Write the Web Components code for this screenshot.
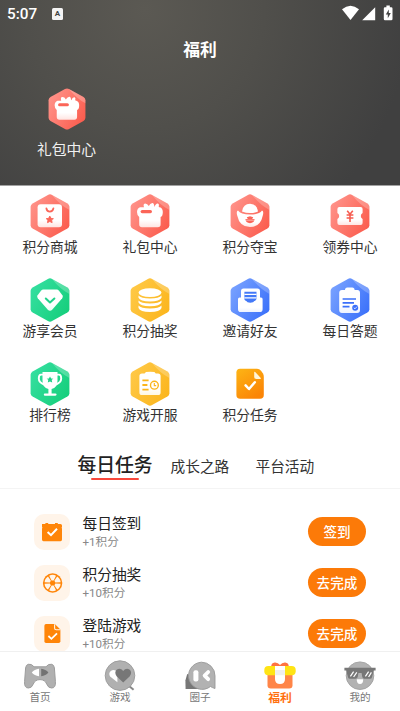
<!DOCTYPE html>
<html lang="zh-CN">
<head>
<meta charset="utf-8">
<title>福利</title>
<style>
html,body{margin:0;padding:0;background:#fff}
body{width:400px;height:711px;overflow:hidden;font-family:Roboto,"Noto Sans CJK SC",sans-serif;color:#333}
</style>
</head>
<body>
<welfare-page></welfare-page>
<script>
const hex = (a, b, c, inner) => `<svg viewBox="0 0 40 44"><defs><linearGradient id="g" x1="0" y1=".2" x2="1" y2=".8"><stop offset="0" stop-color="${a}"/><stop offset="1" stop-color="${b}"/></linearGradient><linearGradient id="w" x1="0" y1="0" x2="0" y2="1"><stop offset=".7" stop-color="#fff"/><stop offset="1" stop-color="${c}"/></linearGradient></defs>
<path d="M17.9.9Q20-.2 22.1.9L37.4 9.4Q39.4 10.6 39.4 12.8V31.2Q39.4 33.4 37.4 34.6L22.1 43.1Q20 44.2 17.9 43.1L2.6 34.6Q.6 33.4.6 31.2V12.8Q.6 10.6 2.6 9.4Z" fill="url(#g)"/><path d="M22 .9L37.4 9.4Q39.4 10.6 39.4 12.8V16Q30 11 22 .9Z" fill="#fff" opacity=".24"/>${inner}</svg>`;
const red = i => hex('#ff938a', '#fb5b4c', '#ffe5e2', i);
const green = i => hex('#35dfa0', '#15ce7b', '#eafff5', i);
const gold = i => hex('#ffc947', '#fbb51c', '#fff8e3', i);
const blue = i => hex('#79a2ff', '#3a70fa', '#edf2ff', i);
const STAR = 'M0-4L1.3-1.5 4-1.1 2 0 2.6 3.3 0 2 -2.6 3.3 -2 0 -4-1.1 -1.3-1.5Z';

const ICONS = {
  mall: red(`<rect x="7.6" y="10.2" width="24.4" height="23" rx="3" fill="url(#w)"/><path d="M16.4 14.4Q16.8 17.6 19.8 17.6T23.4 14.4" fill="none" stroke="#fb6558" stroke-width="1.8" stroke-linecap="round"/><path transform="translate(19.8 25.7)scale(.9)" d="${STAR}" fill="#fb6558" stroke="#fb6558" stroke-width="1" stroke-linejoin="round"/>`),
  gift: red(`<path d="M10 13.2H14Q12.8 9.8 15 9.4 17.4 9.3 18.8 12 20 9.4 22.3 9 24.4 9.2 24.3 13.2 26 9 28 9.6 29.4 10 28.6 13.2H30Q33 14.4 32.8 18.5T30.6 23V30.5Q30.6 33.2 27.8 33.2H12Q9.2 33.2 9.2 30.5V23Q7 21.5 7 18T10 13.2Z" fill="url(#w)"/><path d="M14 12.8H29V15H14Z" fill="#fff"/><rect x="10.6" y="16" width="11.4" height="3.2" rx="1.6" fill="#fb6558"/>`),
  ingot: red(`<path d="M12 17.4Q13.2 9.8 20 9.8T28 17.4Q20 20.8 12 17.4Z" fill="#fff"/><path d="M8 16.6Q10.6 20.6 20 20.6T32 16.6Q34 17.4 32.8 21.4 30.4 33 20 33T7.2 21.4Q6 17.4 8 16.6Z" fill="url(#w)"/><path d="M20 22.2L23.2 23.2 22.2 25.1H24.6Q24.4 29.2 20 29.2T15.4 25.1H17.8L16.8 23.2Z" fill="#fb6558"/><path d="M15.4 26.2H24.6" stroke="#fff" stroke-width=".5"/>`),
  coupon: red(`<path d="M9.4 13H30.6Q32.6 13 32.6 15V19Q30.8 20 30.8 22T32.6 25V29Q32.6 31 30.6 31H9.4Q7.4 31 7.4 29V25Q9.2 24 9.2 22T7.4 19V15Q7.4 13 9.4 13Z" fill="url(#w)"/><path d="M17.2 16.8L20 20.2 22.8 16.8M16.6 21H23.4M16.6 24H23.4M20 20.5V28" fill="none" stroke="#f65c50" stroke-width="1.6"/>`),
  diamond: green(`<path d="M13.4 11.5H26.8Q28 11.5 29 12.7L32.4 17.2Q33.4 18.8 32.2 20.2L22.4 31.4Q20 34 17.6 31.4L7.8 20.2Q6.6 18.8 7.6 17.2L11 12.7Q12 11.5 13.4 11.5Z" fill="url(#w)"/><path d="M15.8 20.5L20 24.4 24.4 20.5" fill="none" stroke="#20d18a" stroke-width="2" stroke-linecap="round" stroke-linejoin="round"/>`),
  coins: gold(`<ellipse cx="20" cy="14.6" rx="11.5" ry="4.4" fill="#fff"/><path d="M8.5 17.6Q11 20.6 20 20.6T31.5 17.6V19.8Q30 23.4 20 23.4T8.5 19.8ZM8.5 22.4Q11 25.4 20 25.4T31.5 22.4V24.6Q30 28.2 20 28.2T8.5 24.6ZM8.5 27.4Q11 30.4 20 30.4T31.5 27.4V30Q30 34 20 34T8.5 30Z" fill="#fff"/>`),
  mail: blue(`<path d="M11 24V13.2Q11 10.6 13.6 10.6H27.4Q30 10.6 30 13.2V24Z" fill="#fff"/><path d="M14.4 13.8H26.5V22L20.4 26 14.4 22Z" fill="#4379f8"/><path d="M14.4 16.3H26.5M14.4 19.9H26.5" stroke="#fff" stroke-width="1.2"/><path d="M8 21Q8 19.5 9.6 19.5H11.6Q13 19.5 13.8 21L15 22.6Q17.4 24.8 20.3 24.8T25.6 22.6L26.8 21Q27.6 19.5 29 19.5H31Q32.6 19.5 32.6 21V31.2Q32.6 34 30 34H10.6Q8 34 8 31.2Z" fill="url(#w)"/>`),
  quiz: blue(`<path d="M12 12H15Q15 9.4 17.4 9.4H22.2Q24.6 9.4 24.6 12H27.4Q30 12 30 15V32Q30 35 27.2 35H12Q9.2 35 9.2 32V15Q9.2 12 12 12Z" fill="url(#w)"/><path d="M12.6 21H26M12.6 24.8H24M12.6 28.6H19.5" stroke="#3b70fa" stroke-width="1.7"/><circle cx="25.2" cy="29.8" r="3" fill="#3b70fa"/><path d="M23.8 29.8L25 30.8 27 28.6" fill="none" stroke="#fff" stroke-width=".8"/>`),
  trophy: green(`<path d="M12.5 10H27.5V18.5Q27.5 26 21.6 27V31.4H25.4Q26.6 31.4 26.6 32.5T25.4 33.7H15Q13.8 33.7 13.8 32.5T15 31.4H18.4V27Q12.5 26 12.5 18.5Z" fill="#fff"/><path d="M13 12.6H11Q8.8 12.6 8.8 16.5T14 22.5M27 12.6H29Q31.2 12.6 31.2 16.5T26 22.5" fill="none" stroke="#fff" stroke-width="1.9"/><path transform="translate(20 17.8)scale(.85)" d="${STAR}" fill="#1ed087"/>`),
  server: gold(`<path d="M12 11.5H14.5L16 10Q20 9.5 24.4 10L25.8 11.5H28Q30.6 11.5 30.6 14V30.4Q30.6 33 28 33H12Q9.4 33 9.4 30.4V14Q9.4 11.5 12 11.5Z" fill="url(#w)"/><path d="M12.4 18.4H18.6M12.4 23H17.4M12.4 27.6H18.6" stroke="#fbb51c" stroke-width="1.8"/><circle cx="24.4" cy="23.2" r="3.9" fill="#fff" stroke="#fbb51c" stroke-width="1.4"/><path d="M24.3 21V23.6H26.2" fill="none" stroke="#fbb51c" stroke-width="1.1"/>`),
  task: `<svg viewBox="0 0 40 44"><defs><linearGradient id="g" x1="0" y1="0" x2=".6" y2="1"><stop stop-color="#fdb515"/><stop offset="1" stop-color="#fb8506"/></linearGradient></defs><path d="M10 6.8H27Q29.5 6.8 31 8.8L33 11.6Q33.8 12.8 33.8 15V33Q33.8 36.8 30 36.8H10.2Q6.4 36.8 6.4 33V10.6Q6.4 6.8 10 6.8Z" fill="url(#g)"/><path d="M24.2 10Q24.6 9.4 25.2 10L31 16.2Q31 17 30 17H26.4Q24.2 17 24.2 15Z" fill="#fff5da"/><path d="M15.6 23.4L19 27 24.8 20.2" fill="none" stroke="#fff" stroke-width="2.5" stroke-linecap="round" stroke-linejoin="round"/></svg>`,
  calendar: `<svg viewBox="0 0 36 36"><path d="M8 10H11.4V9H14.2V10H21V9H23.8V10H26.5Q28 10 28 11.5V13Q27.2 13.6 28 14.4V25.6Q28 27.3 26.5 27.3H9.5Q8 27.3 8 25.6V14.4Q8.8 13.6 8 13Z" fill="#ff8508"/><path d="M13.6 18L17 21.2 23 14.8" fill="none" stroke="#fff" stroke-width="2"/></svg>`,
  wheel: `<svg viewBox="0 0 36 36"><circle cx="18.6" cy="18" r="9.7" fill="#ff8508"/><g fill="#fff6ec">${[0,60,120,180,240,300].map(a=>`<path transform="rotate(${a} 18.6 18)" d="M17.6 15.4L15.2 10.7Q18.6 9 22 10.7L19.6 15.4Z"/>`).join('')}</g><circle cx="18.6" cy="18" r="2" fill="#ff8508"/></svg>`,
  file: `<svg viewBox="0 0 36 36"><path d="M12 8H20.8L26.4 13.6V25.2Q26.4 27 24.6 27H12Q10.4 27 10.4 25.2V9.8Q10.4 8 12 8Z" fill="#ff8508"/><path d="M20.6 8.2V12.2Q20.6 13.8 22.2 13.8H26.4" fill="none" stroke="#fff4e6" stroke-width="1.1"/><path d="M14.4 20L17.4 22.8 23 17.3" fill="none" stroke="#fff" stroke-width="1.8"/></svg>`,
  home: `<svg viewBox="0 0 36 32"><path d="M6.2 5.3Q9.8 4.5 12 7.8H24Q26.2 4.5 29.8 5.3 32 5.8 32.4 9L33.4 22.4Q34 29 29.6 29 26.4 29.2 24.8 25.2 23 20.6 18 20.6T11.2 25.2Q9.6 29.2 6.4 29 2 29 2.6 22.4L3.6 9Q4 5.8 6.2 5.3Z" fill="#b0b0b0" stroke="#9c9c9c" stroke-width="1"/><path d="M17 9.8V17.2Q12.4 16.8 9.8 13.5 12.4 10.2 17 9.8Z" fill="#fff"/><path d="M19.2 9.8V17.2Q23.8 16.8 26.4 13.5 23.8 10.2 19.2 9.8Z" fill="#727272"/></svg>`,
  game: `<svg viewBox="0 0 36 32"><path d="M27 27L31.6 30.8" stroke="#888" stroke-width="2"/><circle cx="18" cy="16.6" r="14.8" fill="#b0b0b0" stroke="#9e9e9e" stroke-width="1"/><path d="M15.4 23.2L8.4 17.8Q6 14.6 8.8 12 12 9.8 15.4 12.6Z" fill="#fff"/><path d="M21.2 23.6L14.6 17.2Q11.8 12.8 15 10.4 18.6 8.6 21.2 12 23.8 8.6 27.4 10.4 30.6 12.8 27.8 17.2Z" fill="#777"/></svg>`,
  circle: `<svg viewBox="0 0 36 32"><path d="M5.2 15L3.4 21.5 3.6 30H17V19Z" fill="#777"/><path d="M19.4 3.2A13.6 13.6 0 0 1 33 16.8V29.5Q30 28.6 28.5 27.5A13.6 13.6 0 1 1 19.4 3.2Z" fill="#b2b2b2" stroke="#999" stroke-width=".9"/><rect x="11.4" y="11.2" width="5" height="11.2" rx="2" fill="#fff"/><path d="M26.2 13L22.6 16.6 26.2 20.2" stroke="#fff" stroke-width="3.8" stroke-linecap="round" stroke-linejoin="round" fill="none"/></svg>`,
  welfare: `<svg viewBox="0 0 36 32"><path d="M9.2 8Q9 3.8 12.8 3.4 16 3.2 18 6 20 3.2 23.2 3.4 27 3.8 26.8 8Z" fill="#ff7441"/><path d="M5.5 14H30.5V26.2Q30.5 29.5 27.2 29.5H8.8Q5.5 29.5 5.5 26.2Z" fill="#ff8548"/><rect x="2.3" y="7" width="31.4" height="9.3" rx="4" fill="#ffe414"/><path d="M13 7H23V20Q23 25 18 25T13 20Z" fill="#fff"/><path d="M13 16.2H23V11H13Z" fill="#efefef"/></svg>`,
  me: `<svg viewBox="0 0 36 32"><circle cx="18" cy="16.7" r="13.8" fill="#b2b2b2" stroke="#a0a0a0" stroke-width=".9"/><path d="M2.4 8.8H33.6V11.4H31.8L30 18.2Q29.7 19.7 28 19.7H22.4Q20.6 19.7 20.3 18L19.6 14H16.4L15.7 18Q15.4 19.7 13.6 19.7H8Q6.3 19.7 6 18.2L4.2 11.4H2.4Z" fill="#777"/><path d="M8.4 17.4L11.6 12.6M11.6 18L14.8 13.4M23.4 17.4L26.6 12.6M26.6 18L29.4 13.4" stroke="#fff" stroke-width="1.2"/><path d="M14.8 20.2H21.2Q21.4 25 18 25T14.8 20.2Z" fill="#fff"/></svg>`
};

class Base extends HTMLElement {
  connectedCallback() {
    if (!this.shadowRoot) this.attachShadow({ mode: 'open' }).innerHTML = this.view();
  }
}
const def = (name, view) => customElements.define(name, class extends Base { view() { return view(this); } });

def('app-icon', e => `<style>:host{display:block;flex:none}svg{display:block;width:100%;height:100%}</style>${ICONS[e.getAttribute('name')]}`);

def('status-bar', () => `<style>
:host{display:flex;height:28px;padding:0 7px;align-items:center;color:#fff;box-sizing:border-box}
time{font:500 15.3px/28px Roboto,sans-serif;width:45px}
.a{width:11px;height:12px;border-radius:1.5px;background:#f4f4f4;color:#444;font:700 8px/12px Roboto,sans-serif;text-align:center}
svg{margin-left:auto;margin-top:-2px;display:block;width:51px;height:17px}</style>
<time>5:07</time><span class="a">A</span>
<svg viewBox="0 0 51 17" fill="#fff"><path d="M0 4.3Q8.5-3 17 4.3L8.5 15Z"/><path d="M33.2 2.2V15.2H20.2Z"/><path d="M44.4.5H47.8V2.2H49.2Q50.5 2.2 50.5 3.5V14Q50.5 15.3 49.2 15.3H43Q41.8 15.3 41.8 14V3.5Q41.8 2.2 43 2.2H44.4Z"/><path d="M46.8 4.4L43.8 9.5H45.8V13.2L48.8 8H46.8Z" fill="#444"/></svg>`);

def('page-header', () => `<style>
:host{display:block;height:186px;box-sizing:border-box;border-bottom:1px solid #a2a2a2;color:#fff;background:radial-gradient(circle 265px at 145px 10px,#5b5953 0,#504f4b 45%,#404040 100%)}
h1{margin:0;padding-top:8px;font-size:16.8px;line-height:29px;font-weight:700;text-align:center}
.q{display:flex;flex-direction:column;align-items:center;width:60px;margin:23px 0 0 36.5px}
app-icon{width:38px;height:42px}
span{font-size:14.8px;line-height:22px;margin-top:9px;white-space:nowrap;color:#f0f0f0}</style>
<status-bar></status-bar><h1>福利</h1><div class="q"><app-icon name="gift"></app-icon><span>礼包中心</span></div>`);

def('grid-entry', e => `<style>
:host{display:flex;flex-direction:column;align-items:center;height:84px}
app-icon{width:40px;height:44px}
span{font-size:13.8px;line-height:20px;margin-top:-1px;color:#333}</style>
<app-icon name="${e.getAttribute('icon')}"></app-icon><span><slot></slot></span>`);

def('entry-grid', () => `<style>:host{display:grid;grid-template-columns:repeat(4,100px);grid-auto-rows:84px;padding-top:8px;height:252px}</style><slot></slot>`);

def('task-tabs', () => `<style>
:host{display:flex;height:43px;box-sizing:border-box;padding:0 0 0 77.5px;align-items:flex-start;border-bottom:1px solid #f4f4f4;white-space:nowrap}
span{font-size:14.7px;line-height:30px;margin-top:6px;color:#333}
.on{display:flex;flex-direction:column;align-items:center;width:75px;font-size:18.8px;font-weight:500;line-height:30px;margin-top:5px;margin-right:18px;color:#222}
.on i{display:block;width:48px;height:2.4px;border-radius:1px;background:#f8483c;margin-top:-3px}
.p{margin-right:26.2px}</style>
<span class="on">每日任务<i></i></span><span class="p">成长之路</span><span>平台活动</span>`);

def('task-row', e => `<style>
:host{display:flex;height:51.2px;padding:0 34px;align-items:flex-start}
.ic{width:36px;height:36px;border-radius:10px;background:#fff4e9;flex:none}
app-icon{width:36px;height:36px}
.tx{flex:1;margin:0 0 0 12.5px;display:flex;flex-direction:column}
b{font-weight:400;font-size:14.7px;line-height:21px;color:#222}
small{font-size:11.6px;line-height:15px;color:#888}
button{font:500 13.6px/28px Roboto,"Noto Sans CJK SC",sans-serif;width:58px;height:29px;padding:0;margin-top:3px;border:0;border-radius:15px;background:#fc7a08;color:#fff}</style>
<div class="ic"><app-icon name="${e.getAttribute('icon')}"></app-icon></div><div class="tx"><b><slot></slot></b><small>${e.getAttribute('points')}</small></div><button>${e.getAttribute('action')}</button>`);

def('nav-item', e => `<style>
:host{display:flex;flex-direction:column;align-items:center;width:80px;font-size:10.6px;line-height:14px;color:#777}
:host([active]){color:#ff700f;font-weight:700;font-size:11.8px}
app-icon{width:36px;height:32px}</style>
<app-icon name="${e.getAttribute('icon')}"></app-icon><span><slot></slot></span>`);

def('tab-bar', () => `<style>:host{display:flex;height:60px;box-sizing:border-box;border-top:1px solid #f0f0f0;padding-top:7px;background:#fff}</style>
<nav-item icon="home">首页</nav-item><nav-item icon="game">游戏</nav-item><nav-item icon="circle">圈子</nav-item><nav-item icon="welfare" active>福利</nav-item><nav-item icon="me">我的</nav-item>`);

def('welfare-page', () => `<style>
:host{display:flex;flex-direction:column;width:400px;height:711px;overflow:hidden}
main{height:651px;flex:none;overflow:hidden}
.tasks{padding-top:25px}</style>
<main><page-header></page-header>
<entry-grid>${[['mall','积分商城'],['gift','礼包中心'],['ingot','积分夺宝'],['coupon','领券中心'],['diamond','游享会员'],['coins','积分抽奖'],['mail','邀请好友'],['quiz','每日答题'],['trophy','排行榜'],['server','游戏开服'],['task','积分任务']].map(([i,t])=>`<grid-entry icon="${i}">${t}</grid-entry>`).join('')}</entry-grid>
<task-tabs></task-tabs>
<div class="tasks"><task-row icon="calendar" points="+1积分" action="签到">每日签到</task-row><task-row icon="wheel" points="+10积分" action="去完成">积分抽奖</task-row><task-row icon="file" points="+10积分" action="去完成">登陆游戏</task-row></div></main>
<tab-bar></tab-bar>`);
</script>
</body>
</html>
